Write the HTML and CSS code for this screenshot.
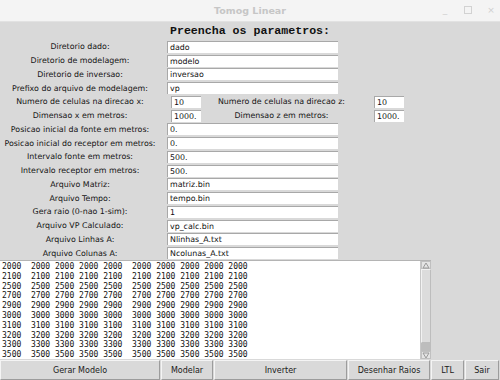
FILE: index.html
```html
<!DOCTYPE html>
<html>
<head>
  <title>Tomog Linear</title>
  <link rel="stylesheet" href="styles.css">
</head>
<body>
<div class="window">
  <div class="titlebar">
    <span class="title">Tomog Linear</span>
    <div class="controls">
      <span class="ctl">_</span>
      <span class="ctl box"></span>
      <span class="ctl">&#215;</span>
    </div>
  </div>

  <div class="content">
    <h1 class="heading">Preencha os parametros:</h1>

    <div class="form">
      <label>Diretorio dado:</label>
      <div class="entry wide">dado</div>

      <label>Diretorio de modelagem:</label>
      <div class="entry wide">modelo</div>

      <label>Diretorio de inversao:</label>
      <div class="entry wide">inversao</div>

      <label>Prefixo do arquivo de modelagem:</label>
      <div class="entry wide">vp</div>

      <label>Numero de celulas na direcao x:</label>
      <div class="entry small">10</div>
      <label class="second">Numero de celulas na direcao z:</label>
      <div class="entry small">10</div>

      <label>Dimensao x em metros:</label>
      <div class="entry small">1000.</div>
      <label class="second">Dimensao z em metros:</label>
      <div class="entry small">1000.</div>

      <label>Posicao inicial da fonte em metros:</label>
      <div class="entry wide">0.</div>

      <label>Posicao inicial do receptor em metros:</label>
      <div class="entry wide">0.</div>

      <label>Intervalo fonte em metros:</label>
      <div class="entry wide">500.</div>

      <label>Intervalo receptor em metros:</label>
      <div class="entry wide">500.</div>

      <label>Arquivo Matriz:</label>
      <div class="entry wide">matriz.bin</div>

      <label>Arquivo Tempo:</label>
      <div class="entry wide">tempo.bin</div>

      <label>Gera raio (0-nao 1-sim):</label>
      <div class="entry wide">1</div>

      <label>Arquivo VP Calculado:</label>
      <div class="entry wide">vp_calc.bin</div>

      <label>Arquivo Linhas A:</label>
      <div class="entry wide">Nlinhas_A.txt</div>

      <label>Arquivo Colunas A:</label>
      <div class="entry wide">Ncolunas_A.txt</div>
    </div>

    <div class="output">
<pre class="text">2000  2000 2000 2000 2000  2000 2000 2000 2000 2000
2100  2100 2100 2100 2100  2100 2100 2100 2100 2100
2500  2500 2500 2500 2500  2500 2500 2500 2500 2500
2700  2700 2700 2700 2700  2700 2700 2700 2700 2700
2900  2900 2900 2900 2900  2900 2900 2900 2900 2900
3000  3000 3000 3000 3000  3000 3000 3000 3000 3000
3100  3100 3100 3100 3100  3100 3100 3100 3100 3100
3200  3200 3200 3200 3200  3200 3200 3200 3200 3200
3300  3300 3300 3300 3300  3300 3300 3300 3300 3300
3500  3500 3500 3500 3500  3500 3500 3500 3500 3500</pre>
      <div class="scrollbar">
        <div class="arrow">
          <svg width="8" height="7" viewBox="0 0 8 7"><polygon points="4,1 7,6 1,6" fill="none" stroke="#9a9a9a" stroke-width="1"/></svg>
        </div>
        <div class="slider"></div>
        <div class="trough"></div>
        <div class="arrow">
          <svg width="8" height="7" viewBox="0 0 8 7"><polygon points="1,1 7,1 4,6" fill="none" stroke="#9a9a9a" stroke-width="1"/></svg>
        </div>
      </div>
    </div>

    <div class="buttons">
      <button class="btn gerar">Gerar Modelo</button>
      <button class="btn modelar">Modelar</button>
      <button class="btn inverter">Inverter</button>
      <button class="btn raios">Desenhar Raios</button>
      <button class="btn ltl">LTL</button>
      <button class="btn sair">Sair</button>
    </div>
  </div>
</div>
</body>
</html>
```

FILE: styles.css
```css
body {
  margin: 0;
  font-family: "DejaVu Sans", sans-serif;
  background: #d9d9d9;
}

.window {
  width: 500px;
  height: 380px;
  display: flex;
  flex-direction: column;
  overflow: hidden;
}

.titlebar {
  height: 22px;
  flex: none;
  background: #f4f4f4;
  border-bottom: 1px solid #e2e2e2;
  box-sizing: border-box;
  display: flex;
  align-items: center;
  justify-content: center;
  position: relative;
}

.title {
  font-weight: bold;
  font-size: 9.5px;
  color: #c6c6c6;
}

.controls {
  position: absolute;
  right: 4px;
  top: 5px;
  display: flex;
  gap: 12px;
  align-items: center;
}

.ctl {
  color: #cfcfcf;
  font-size: 9px;
  width: 10px;
  text-align: center;
}

.ctl.box {
  width: 6px;
  height: 6px;
  border: 1px solid #d2d2d2;
  margin: 0 2px;
}

.content {
  flex: 1;
  display: flex;
  flex-direction: column;
}

.heading {
  margin: 0;
  height: 18px;
  line-height: 18px;
  text-align: center;
  font-family: "Liberation Mono", monospace;
  font-weight: bold;
  font-size: 11.6px;
  color: #111;
}

.form {
  display: grid;
  grid-template-columns: 167px 38px 153px 62px;
  grid-auto-rows: 13.75px;
  font-size: 7.9px;
}

.form label {
  grid-column: 1;
  padding-right: 7px;
  text-align: center;
  align-self: center;
  color: #141414;
  white-space: nowrap;
}

.form label.second {
  grid-column: 3;
  padding-right: 0;
}

.entry {
  height: 12px;
  line-height: 12px;
  box-sizing: border-box;
  background: #fff;
  border-top: 1px solid #a8a8a8;
  border-left: 1px solid #a8a8a8;
  padding-left: 2px;
  align-self: center;
  color: #111;
  white-space: nowrap;
}

.entry.wide {
  grid-column: 2 / span 2;
  width: 171px;
}

.entry.small {
  width: 30px;
  justify-self: center;
}

.output {
  width: 431px;
  height: 99px;
  display: flex;
  border-top: 1px solid #b4b4b4;
  box-sizing: border-box;
  background: #fff;
}

.text {
  flex: 1;
  margin: 0;
  padding: 1px 0 0 2px;
  font-family: "DejaVu Sans Mono", monospace;
  font-size: 8px;
  line-height: 9.8px;
  color: #111;
  overflow: hidden;
}

.scrollbar {
  width: 10px;
  display: flex;
  flex-direction: column;
  background: #d9d9d9;
  border-left: 1px solid #c8c8c8;
}

.arrow {
  height: 8px;
  display: flex;
  align-items: center;
  justify-content: center;
  background: #e4e4e4;
  border: 1px solid #c0c0c0;
  box-sizing: border-box;
}

.slider {
  height: 74px;
  background: #dcdcdc;
  border: 1px solid #bdbdbd;
  border-top-color: #f2f2f2;
  border-left-color: #f2f2f2;
  box-sizing: border-box;
}

.trough {
  flex: 1;
  background: #bdbdbd;
}

.buttons {
  display: flex;
  gap: 1px;
  height: 21px;
  padding-top: 1px;
}

.btn {
  height: 20px;
  padding: 0;
  font-family: "DejaVu Sans", sans-serif;
  font-size: 8px;
  color: #1a1a1a;
  background: #d9d9d9;
  border: 1px solid;
  border-color: #f4f4f4 #9c9c9c #9c9c9c #f4f4f4;
}

.gerar { width: 160px; }
.modelar { width: 52px; }
.inverter { width: 133px; }
.raios { width: 82px; }
.ltl { width: 33px; }
.sair { width: 34px; }
```
